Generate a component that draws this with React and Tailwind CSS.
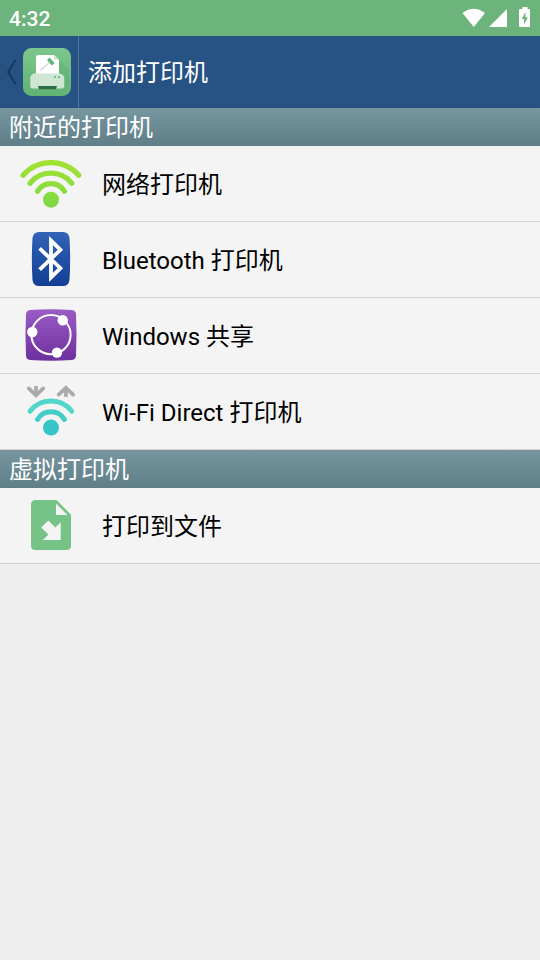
import { useState } from "react";

const WifiIcon = () => (
  <svg viewBox="0 0 63 63" className="size-[63px] shrink-0" fill="none" aria-hidden="true">
    <defs>
      <linearGradient id="wifiGreen" gradientUnits="userSpaceOnUse" x1="0" y1="8" x2="0" y2="56">
        <stop offset="0" stopColor="#a4e233" />
        <stop offset="1" stopColor="#7bd944" />
      </linearGradient>
    </defs>
    <g stroke="url(#wifiGreen)" strokeWidth="5.2" strokeLinecap="round">
      <path d="M3 23.3A37 37 0 0 1 58.8 23.3" />
      <path d="M10 31.3A26.7 26.7 0 0 1 51.8 31.3" />
      <path d="M17.5 39.3A15.6 15.6 0 0 1 44.4 39.3" />
    </g>
    <circle cx="31" cy="47.7" r="8" fill="url(#wifiGreen)" />
  </svg>
);

const BluetoothIcon = () => (
  <svg viewBox="0 0 63 63" className="size-[63px] shrink-0" fill="none" aria-hidden="true">
    <defs>
      <linearGradient id="btBlue" x1="0" y1="0" x2="0" y2="1">
        <stop offset="0" stopColor="#3163b6" />
        <stop offset="1" stopColor="#123f94" />
      </linearGradient>
    </defs>
    <path
      d="M19 4H43Q48.6 4 49.5 10Q50.8 31 49.5 52Q48.6 58 43 58H19Q13.4 58 12.5 52Q11.2 31 12.5 10Q13.4 4 19 4Z"
      fill="url(#btBlue)"
    />
    <path
      d="M19.6 20.4L40.4 40.2L31 49.4V12.6L40.4 21.8L19.6 41.6"
      stroke="#fff"
      strokeWidth="3.8"
      strokeMiterlimit="10"
    />
  </svg>
);

const ShareIcon = () => (
  <svg viewBox="0 0 63 63" className="size-[63px] shrink-0" fill="none" aria-hidden="true">
    <defs>
      <linearGradient id="sharePurple" x1="0" y1="0" x2="0" y2="1">
        <stop offset="0" stopColor="#9a5cc4" />
        <stop offset="1" stopColor="#6d309f" />
      </linearGradient>
    </defs>
    <path
      d="M10 6Q31 4.6 52 6Q55.6 6.4 56 10Q57 31 56 52Q55.6 55.6 52 56Q31 57.4 10 56Q6.4 55.6 6 52Q5 31 6 10Q6.4 6.4 10 6Z"
      fill="url(#sharePurple)"
    />
    <circle cx="31" cy="30.7" r="19.6" stroke="#fff" strokeWidth="2" />
    <g fill="#fff">
      <circle cx="42.7" cy="16.2" r="5.2" />
      <circle cx="12.3" cy="28" r="5.2" />
      <circle cx="37" cy="48.6" r="5.2" />
    </g>
  </svg>
);

const WifiDirectIcon = () => (
  <svg viewBox="0 0 63 63" className="size-[63px] shrink-0" fill="none" aria-hidden="true">
    <g stroke="#ababab" strokeWidth="3.8">
      <path d="M16 6V15" />
      <path d="M8.8 8.4L16 15.3L23.2 8.4" strokeLinecap="round" />
      <path d="M45.9 16.8V8" />
      <path d="M38.7 14.6L45.9 7.8L53.1 14.6" strokeLinecap="round" />
    </g>
    <g strokeWidth="5" strokeLinecap="round">
      <path d="M10 31.3A26.4 26.4 0 0 1 51.8 31.3" stroke="#51d6ca" />
      <path d="M17.5 39.4A15.6 15.6 0 0 1 44.4 39.4" stroke="#43cdc8" />
    </g>
    <circle cx="31" cy="47.6" r="8" fill="#38c5c7" />
  </svg>
);

const FileIcon = () => (
  <svg viewBox="0 0 63 63" className="size-[63px] shrink-0" aria-hidden="true">
    <path
      d="M15.5 6H36.5L51 20.7V51.5Q51 56 46.5 56H15.5Q11 56 11 51.5V10.5Q11 6 15.5 6Z"
      fill="#76c388"
    />
    <path d="M36 9.5V21H47.5Z" fill="#f4f4f4" />
    <path
      d="M40.7 28.3V46H23L28.4 40.6L21.2 33.4L28.3 26.5L35.4 33.6Z"
      fill="#f4f4f4"
    />
  </svg>
);

const PrinterLogo = () => (
  <svg viewBox="0 0 48 48" className="size-12" fill="none" aria-hidden="true">
    <defs>
      <linearGradient id="logoGreen" x1="0" y1="0" x2="0" y2="1">
        <stop offset="0" stopColor="#7cc78d" />
        <stop offset="1" stopColor="#62b175" />
      </linearGradient>
    </defs>
    <rect width="48" height="48" rx="8.5" fill="url(#logoGreen)" />
    <path d="M35.5 11L46 21.5V36L41 40H17L9 40Z" fill="#5aa96d" opacity="0.35" />
    <path d="M15 7H31L36 12V27H13V9Q13 7 15 7Z" fill="#fff" />
    <path d="M31 7V10.5Q31 12 32.5 12H36Z" fill="#d5e8d9" />
    <path d="M17.3 22.7L27 14" stroke="#dcdcdc" strokeWidth="1.6" />
    <path d="M25.3 10.8L30.3 16.2" stroke="#5fb577" strokeWidth="3.6" />
    <path
      d="M11 25.5H37Q41 26.5 41.3 30V38Q41.3 40.5 38.5 40.5H10Q7.3 40.5 7.3 38V30Q7.6 26.5 11 25.5Z"
      fill="#d0e6d4"
    />
    <path d="M15 38H34L33 41.2H16Z" fill="#2f6b45" />
    <path d="M31 29H33M35 29H37" stroke="#76c388" strokeWidth="1.8" />
  </svg>
);

const StatusBar = () => (
  <div className="flex h-9 items-center justify-between bg-[#6cb47c] px-[9px] text-white">
    <span className="pt-0.5 text-[21px] leading-8 font-medium">4:32</span>
    <svg viewBox="0 0 69 22" className="h-[22px] w-[69px]" fill="#fff" aria-hidden="true">
      <path d="M0.5 6Q11.5 -2.5 23 6L11.8 20Z" />
      <path d="M45 2V20H27Z" />
      <path
        fillRule="evenodd"
        d="M60.5 0H65.5V2H67Q68 2 68 3V19Q68 20 67 20H58Q57 20 57 19V3Q57 2 58 2H60.5ZM63.5 5L59.8 12H62V17.5L65.8 10.2H63.5Z"
      />
    </svg>
  </div>
);

const sections = [
  {
    title: "附近的打印机",
    items: [
      { id: "network", label: "网络打印机", Icon: WifiIcon },
      { id: "bluetooth", label: "Bluetooth 打印机", Icon: BluetoothIcon },
      { id: "windows", label: "Windows 共享", Icon: ShareIcon },
      { id: "wifi-direct", label: "Wi-Fi Direct 打印机", Icon: WifiDirectIcon },
    ],
  },
  {
    title: "虚拟打印机",
    items: [{ id: "file", label: "打印到文件", Icon: FileIcon }],
  },
];

export default function App() {
  const [selected, setSelected] = useState(null);

  return (
    <div className="min-h-screen bg-[#eeeeee] font-[Roboto,'Noto_Sans_CJK_SC',sans-serif] text-2xl text-black">
      <StatusBar />

      {/* Action bar */}
      <header className="flex h-[72px] items-center bg-[#275284] text-white">
        <button
          type="button"
          aria-label="返回"
          className="flex h-full items-center gap-1.5 border-r border-[#52759d] px-[7px]"
        >
          <svg viewBox="0 0 10 26" className="h-[26px] w-2.5" fill="none" aria-hidden="true">
            <path d="M8.5 1L1.2 13L8.5 25" stroke="#193860" strokeWidth="2.2" />
          </svg>
          <PrinterLogo />
        </button>
        <h1 className="pt-0.5 pl-[9px]">添加打印机</h1>
      </header>

      {/* Printer types */}
      <main>
        {sections.map((section) => (
          <section key={section.title}>
            <h2 className="h-[38px] bg-linear-to-b from-[#7796a0] to-[#607e88] pl-[9px] leading-10 text-white">
              {section.title}
            </h2>
            <ul>
              {section.items.map(({ id, label, Icon }) => (
                <li key={id} className="border-b border-[#d3d3d3]">
                  <button
                    type="button"
                    aria-pressed={selected === id}
                    onClick={() => setSelected(id)}
                    className="flex h-[75px] w-full items-center gap-[19px] bg-[#f4f4f4] pl-5 text-left active:bg-[#dddddd]"
                  >
                    <Icon />
                    <span className="pt-0.5">{label}</span>
                  </button>
                </li>
              ))}
            </ul>
          </section>
        ))}
      </main>
    </div>
  );
}
